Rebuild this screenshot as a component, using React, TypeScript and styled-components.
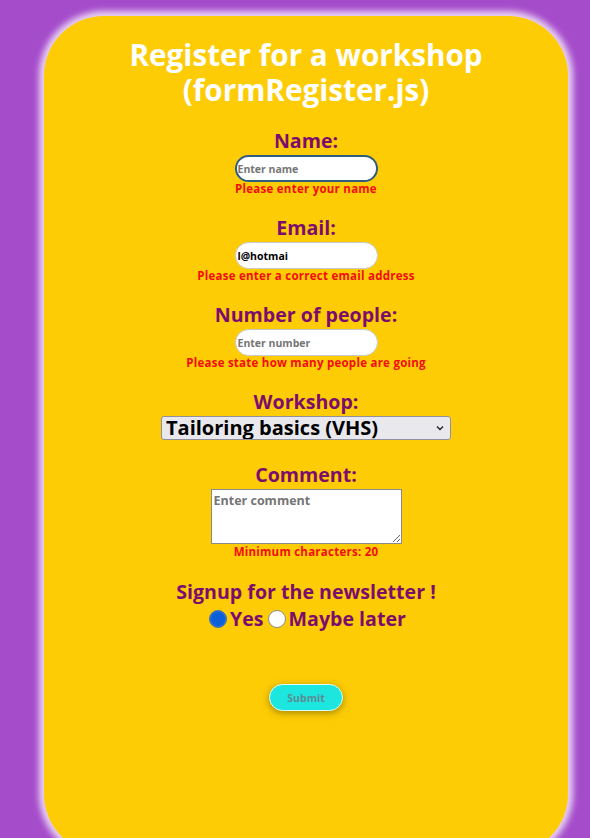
import React from "react";
import styled, { createGlobalStyle } from "styled-components";

const Global = createGlobalStyle`
  html, body {
    margin: 0;
    padding: 0;
    background: #a54ccb;
    height: 100%;
    overflow: hidden;
  }
  body {
    font-family: "Open Sans", "Liberation Sans", sans-serif;
  }
  * { box-sizing: border-box; }
`;

const Page = styled.div`
  padding: 16px 22px 0 44px;
  height: 838px;
`;

const Card = styled.form`
  background: #fecc05;
  border-radius: 60px;
  height: 838px;
  box-shadow: 0 0 6px 5px rgba(255, 255, 255, 0.75);
  padding: 21px 20px 0;
  display: flex;
  flex-direction: column;
  align-items: center;
`;

const Title = styled.h1`
  margin: 0 0 23px;
  color: #ffffff;
  font-size: 29.7px;
  line-height: 35px;
  font-weight: 700;
  text-align: center;
`;

const Group = styled.div<{ $gap?: number }>`
  display: flex;
  flex-direction: column;
  align-items: center;
  margin-bottom: ${(p) => p.$gap ?? 22}px;
`;

const Label = styled.label`
  color: #7d0d6d;
  font-size: 19.6px;
  line-height: 22px;
  font-weight: 700;
  margin-bottom: 3px;
`;

const TextInput = styled.input<{ $focused?: boolean }>`
  width: 143px;
  height: 27px;
  border-radius: 14px;
  border: ${(p) => (p.$focused ? "2px solid #2f5d7e" : "1px solid #c9c9c9")};
  background: #fff;
  padding: 0 ${(p) => (p.$focused ? 1 : 2)}px;
  font-family: inherit;
  font-size: 10.5px;
  font-weight: 700;
  color: #000;
  outline: none;
  &::placeholder { color: #757575; }
`;

const ErrorText = styled.span`
  color: #f20d0d;
  font-size: 11.5px;
  line-height: 13px;
  letter-spacing: 0.25px;
  font-weight: 700;
`;

const SelectWrap = styled.div`
  position: relative;
  width: 290px;
  height: 24px;
`;

const Select = styled.select`
  appearance: none;
  -webkit-appearance: none;
  display: block;
  width: 100%;
  height: 24px;
  border: 1px solid #8f8f9d;
  border-radius: 3px;
  background: #e9e9ed;
  font-family: inherit;
  font-size: 20px;
  line-height: 22px;
  font-weight: 700;
  color: #000;
  padding: 0 20px 0 4px;
  margin: 0;
`;

const Chevron = styled.svg`
  position: absolute;
  right: 7px;
  top: 9px;
  width: 8px;
  height: 6px;
  pointer-events: none;
`;

const TextArea = styled.textarea`
  width: 191px;
  height: 55px;
  border: 1px solid #8a8a8a;
  background: #fff;
  font-family: inherit;
  font-size: 12.5px;
  font-weight: 700;
  padding: 2px 2px;
  resize: both;
  margin-bottom: 1px;
  &::placeholder { color: #757575; }
`;

const RadioRow = styled.div`
  display: flex;
  align-items: center;
  margin-top: 2px;
  padding-left: 3px;
`;

const Radio = styled.input`
  appearance: none;
  width: 18px;
  height: 18px;
  margin: 0 3px 0 0;
  border-radius: 50%;
  border: 1px solid #8a8a8a;
  background: #fff;
  &:checked {
    background: #0b5fd8;
    border: 1px solid #4a6fa8;
    box-shadow: inset 0 0 0 1px #2c71de;
  }
`;

const RadioLabel = styled.label`
  color: #7d0d6d;
  font-size: 19.6px;
  line-height: 22px;
  font-weight: 700;
  &:not(:last-child) { margin-right: 4px; }
`;

const SubmitButton = styled.button`
  margin-top: 54px;
  width: 74px;
  height: 27px;
  border-radius: 14px;
  border: 1px solid #dff;
  background: #1de6df;
  color: #5b8c92;
  font-family: inherit;
  font-size: 10.5px;
  font-weight: 700;
  box-shadow: 0 2px 7px rgba(90, 80, 0, 0.55);
`;

export default function App() {
  return (
    <>
      <Global />
      <Page>
        <Card onSubmit={(e) => e.preventDefault()}>
          <Title>
            Register for a workshop
            <br />
            (formRegister.js)
          </Title>
          <Group>
            <Label htmlFor="name">Name:</Label>
            <TextInput id="name" $focused placeholder="Enter name" />
            <ErrorText>Please enter your name</ErrorText>
          </Group>
          <Group>
            <Label htmlFor="email">Email:</Label>
            <TextInput id="email" defaultValue="l@hotmai" />
            <ErrorText>Please enter a correct email address</ErrorText>
          </Group>
          <Group>
            <Label htmlFor="people">Number of people:</Label>
            <TextInput id="people" placeholder="Enter number" />
            <ErrorText>Please state how many people are going</ErrorText>
          </Group>
          <Group $gap={24}>
            <Label htmlFor="workshop">Workshop:</Label>
            <SelectWrap>
              <Select id="workshop" defaultValue="vhs">
                <option value="vhs">Tailoring basics (VHS)</option>
              </Select>
              <Chevron viewBox="0 0 8 6">
                <path d="M1 1.5 L4 4.5 L7 1.5" fill="none" stroke="#222" strokeWidth="1.4" />
              </Chevron>
            </SelectWrap>
          </Group>
          <Group $gap={23}>
            <Label htmlFor="comment">Comment:</Label>
            <TextArea id="comment" placeholder="Enter comment" />
            <ErrorText>Minimum characters: 20</ErrorText>
          </Group>
          <Group $gap={0}>
            <Label>Signup for the newsletter !</Label>
            <RadioRow>
              <Radio type="radio" name="news" id="yes" defaultChecked />
              <RadioLabel htmlFor="yes">Yes</RadioLabel>
              <Radio type="radio" name="news" id="later" />
              <RadioLabel htmlFor="later">Maybe later</RadioLabel>
            </RadioRow>
          </Group>
          <SubmitButton type="submit">Submit</SubmitButton>
        </Card>
      </Page>
    </>
  );
}
